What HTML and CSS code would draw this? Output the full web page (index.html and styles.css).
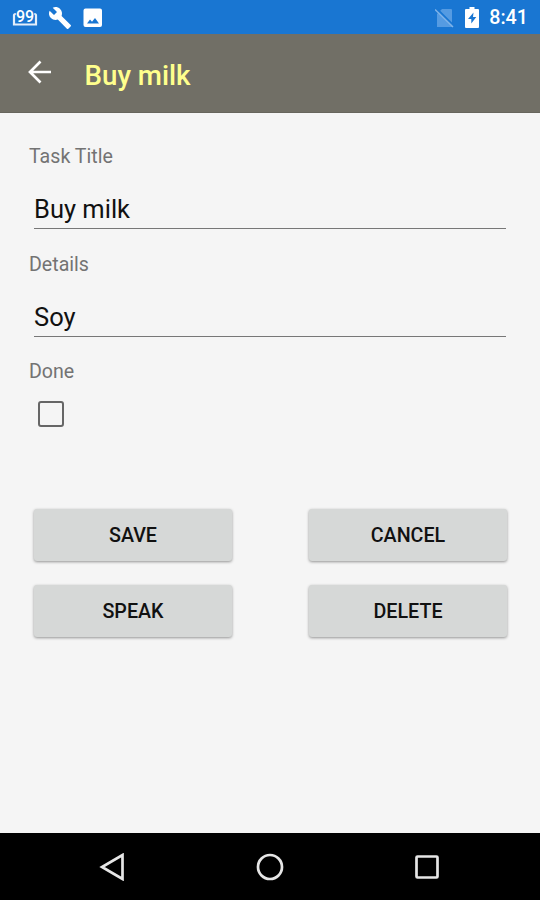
FILE: index.html
```html
<!DOCTYPE html>
<html lang="en">
<head>
    <meta charset="UTF-8">
    <meta name="viewport" content="width=device-width, initial-scale=1.0">
    <title>Buy milk</title>
    <link rel="stylesheet" href="styles.css">
</head>
<body>
    <div class="status-bar">
        <div class="status-left">
            <svg width="26" height="20" viewBox="0 0 26 20">
                <path d="M5 6H3.500Q2 6 2 7.500V16.500H24V7.500Q24 6 22.500 6H21" fill="none" stroke="#e3eefa" stroke-width="2.200"/>
                <text x="13" y="13.500" class="badge-text">99</text>
            </svg>
            <svg width="24" height="24" viewBox="0 0 24 24">
                <path fill="#fff" d="M22.7 19l-9.1-9.1c.9-2.3.4-5-1.5-6.9-2-2-5-2.4-7.4-1.3L9 6 6 9 1.6 4.7C.4 7.1.9 10.1 2.9 12.1c1.9 1.9 4.6 2.4 6.9 1.5l9.1 9.1c.4.4 1 .4 1.4 0l2.3-2.3c.5-.4.5-1.1.1-1.4z"/>
            </svg>
            <svg width="20" height="20" viewBox="0 0 20 20">
                <path fill="#fff" fill-rule="evenodd" d="M2.500 .5h14.500q2 0 2 2v14.500q0 2-2 2H2.500q-2 0-2-2V2.500q0-2 2-2zM4 15.500h12l-4-5.500-3 3.700-2-2.200z"/>
            </svg>
        </div>
        <div class="status-right">
            <svg width="20" height="20" viewBox="0 0 20 20">
                <path fill="#559be2" d="M7 1h9q1 0 1 1v17H2V6z"/>
                <path d="M1.500 .5l18 18" stroke="#1976d2" stroke-width="2"/>
                <path d="M0 1.500l18 17.500" stroke="#7fb3e8" stroke-width="1.500"/>
            </svg>
            <svg width="14" height="21" viewBox="0 0 14 21">
                <path fill="#fff" d="M4.500 0h5v2H13q1 0 1 1v17q0 1-1 1H1q-1 0-1-1V3q0-1 1-1h3.500z"/>
                <path fill="#1976d2" d="M8.500 5.500L3 12h3.300v4.500l5-6.500H8z"/>
            </svg>
            <span class="clock">8:41</span>
        </div>
    </div>

    <div class="app-bar">
        <svg class="back" width="24" height="24" viewBox="0 0 24 24">
            <path d="M23 12H2M12.500 1.500L2 12l10.500 10.500" fill="none" stroke="#fff" stroke-width="2.700"/>
        </svg>
        <h1>Buy milk</h1>
    </div>

    <form class="content">
        <label for="title">Task Title</label>
        <input type="text" id="title" value="Buy milk">
        <label for="details">Details</label>
        <input type="text" id="details" value="Soy">
        <label for="done">Done</label>
        <input type="checkbox" id="done">

        <div class="buttons">
            <button type="button">SAVE</button>
            <button type="button">CANCEL</button>
            <button type="button">SPEAK</button>
            <button type="button">DELETE</button>
        </div>
    </form>

    <div class="nav-bar">
        <svg width="28" height="28" viewBox="0 0 28 28">
            <path d="M23.500 2v24L3 14z"/>
        </svg>
        <svg width="28" height="28" viewBox="0 0 28 28">
            <circle cx="14" cy="14" r="12"/>
        </svg>
        <svg width="28" height="28" viewBox="0 0 28 28">
            <rect x="3.500" y="3.500" width="21" height="21" rx="1"/>
        </svg>
    </div>
</body>
</html>
```
FILE: styles.css
```css
* {
    box-sizing: border-box;
}
body {
    margin: 0;
    height: 900px;
    display: flex;
    flex-direction: column;
    font-family: Roboto, sans-serif;
    background-color: #f5f5f5;
    overflow: hidden;
}
.status-bar {
    height: 34px;
    padding: 1px 12px 0 12px;
    display: flex;
    justify-content: space-between;
    align-items: center;
    background-color: #1976d2;
}
.status-left,
.status-right {
    display: flex;
    align-items: center;
    gap: 10px;
}
.status-left svg:last-child {
    margin-left: 1px;
}
.badge-text {
    font-size: 16px;
    font-weight: 500;
    fill: #fff;
    stroke: #1976d2;
    stroke-width: 2px;
    paint-order: stroke;
    text-anchor: middle;
}
.clock {
    font-size: 19.700px;
    font-weight: 500;
    color: white;
}
.app-bar {
    height: 79px;
    padding-left: 28px;
    display: flex;
    align-items: center;
    background-color: #716f66;
    border-bottom: 1px solid #67655d;
}
.back {
    margin-bottom: 2px;
}
h1 {
    margin: 4px 0 0 32.500px;
    font-size: 27.700px;
    font-weight: 500;
    color: #ffff8d;
}
.content {
    flex: 1;
    padding: 31px 33px 0 29px;
    display: flex;
    flex-direction: column;
}
label {
    height: 24px;
    line-height: 25px;
    font-size: 19.600px;
    color: #737373;
}
input[type="text"] {
    height: 49px;
    margin: 12px 1px 22.500px 5px;
    padding: 10px 0 0;
    border: none;
    border-bottom: 1.500px solid #777;
    background: none;
    font-family: inherit;
    font-size: 25.500px;
    color: #111;
    outline: none;
}
input[type="checkbox"] {
    appearance: none;
    width: 26px;
    height: 26px;
    margin: 17.500px 0 0 9px;
    border: 2.500px solid #666;
    border-radius: 3px;
}
.buttons {
    margin: 82px 0 0 5px;
    display: grid;
    grid-template-columns: 198px 198px;
    justify-content: space-between;
    row-gap: 24px;
}
button {
    height: 52px;
    padding: 1px 0 0;
    border: none;
    border-radius: 3px;
    background-color: #d6d8d7;
    box-shadow: 0 1px 3px rgba(0, 0, 0, 0.4);
    font-family: inherit;
    font-size: 19.700px;
    font-weight: 500;
    color: #111;
}
.nav-bar {
    height: 67px;
    padding: 0 99px;
    display: flex;
    justify-content: space-between;
    align-items: center;
    background-color: black;
}
.nav-bar svg {
    fill: none;
    stroke: #e6e6e6;
    stroke-width: 2.700;
}
```
